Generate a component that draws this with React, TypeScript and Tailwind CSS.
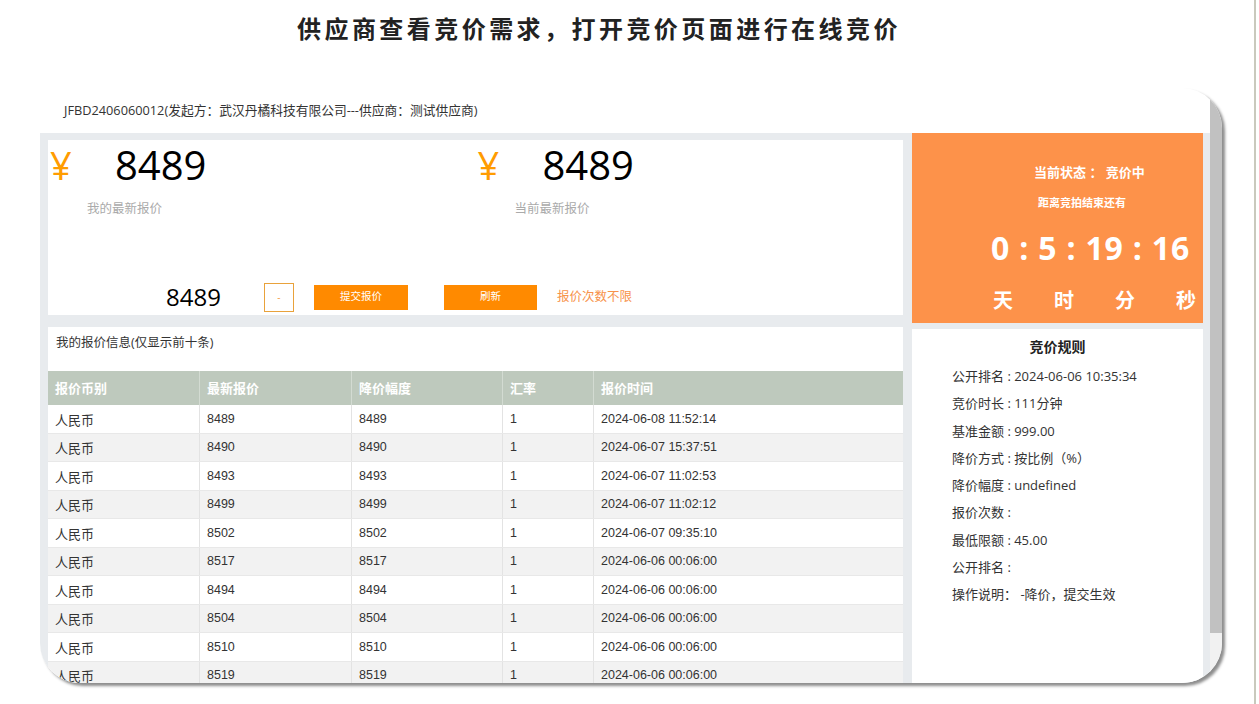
import React from "react";

const rows: [string, string, string, string, string][] = [
  ["人民币", "8489", "8489", "1", "2024-06-08 11:52:14"],
  ["人民币", "8490", "8490", "1", "2024-06-07 15:37:51"],
  ["人民币", "8493", "8493", "1", "2024-06-07 11:02:53"],
  ["人民币", "8499", "8499", "1", "2024-06-07 11:02:12"],
  ["人民币", "8502", "8502", "1", "2024-06-07 09:35:10"],
  ["人民币", "8517", "8517", "1", "2024-06-06 00:06:00"],
  ["人民币", "8494", "8494", "1", "2024-06-06 00:06:00"],
  ["人民币", "8504", "8504", "1", "2024-06-06 00:06:00"],
  ["人民币", "8510", "8510", "1", "2024-06-06 00:06:00"],
  ["人民币", "8519", "8519", "1", "2024-06-06 00:06:00"],
];

const headers = ["报价币别", "最新报价", "降价幅度", "汇率", "报价时间"];

const rules = [
  "公开排名 : 2024-06-06 10:35:34",
  "竞价时长 : 111分钟",
  "基准金额 : 999.00",
  "降价方式 : 按比例（%）",
  "降价幅度 : undefined",
  "报价次数 :",
  "最低限额 : 45.00",
  "公开排名 :",
  "操作说明： -降价，提交生效",
];

function PriceBlock({ label }: { label: string }) {
  return (
    <div className="pl-[2px] pt-[3px]">
      <div className="flex items-center h-[44px]">
        <span className="w-[65px] text-[38px] leading-none text-[#ff9c00]">¥</span>
        <span className="text-[40px] leading-none text-black">8489</span>
      </div>
      <div className="pl-[37px] mt-[14px] text-[12.5px] leading-[16px] text-[#aaaaaa]">{label}</div>
    </div>
  );
}

export default function App() {
  return (
    <div
      className="w-[1259px] h-[704px] bg-white overflow-hidden flex"
      style={{ fontFamily: '"Open Sans", "Noto Sans CJK SC", sans-serif' }}
    >
      <div className="w-[1254px] flex flex-col">
        <div className="h-[88px] pt-[13px] pl-[297px]">
          <h1
            className="text-[24px] leading-[30px] font-bold tracking-[3.45px] text-[#222222] whitespace-nowrap"
            style={{ fontFamily: '"Noto Sans CJK SC", sans-serif' }}
          >
            供应商查看竞价需求，打开竞价页面进行在线竞价
          </h1>
        </div>

        <div className="ml-[40px] w-[1182px] h-[595px] rounded-[40px] bg-white overflow-hidden flex shadow-[3px_3px_3px_rgba(0,0,0,0.45)]">
          <div className="flex-1 flex flex-col min-w-0">
            <div className="h-[45px] flex items-center pl-[24px] text-[12.75px] text-[#333333] whitespace-nowrap">
              JFBD2406060012(发起方：武汉丹橘科技有限公司---供应商：测试供应商)
            </div>

            <div className="flex-1 bg-[#e8ebee] flex pl-[8px] gap-[9px] min-h-0">
              {/* Left column */}
              <div className="w-[855px] flex flex-col pt-[7px] min-h-0">
                <div className="h-[175px] bg-white flex flex-col">
                  <div className="grid grid-cols-2">
                    <PriceBlock label="我的最新报价" />
                    <PriceBlock label="当前最新报价" />
                  </div>
                  <div className="mt-auto mb-[3px] h-[30px] flex items-center pl-[118px]">
                    <span className="text-[24px] leading-none text-black">8489</span>
                    <div className="ml-[43px] w-[30px] h-[29px] border border-[#e9a23b] bg-white flex items-center justify-center text-[10px] text-[#f39c4a]">
                      -
                    </div>
                    <div className="ml-[20px] w-[94px] h-[25px] bg-[#ff8a00] text-white text-[10.5px] flex items-center justify-center">
                      提交报价
                    </div>
                    <div className="ml-[36px] w-[93px] h-[25px] bg-[#ff8a00] text-white text-[10.5px] flex items-center justify-center">
                      刷新
                    </div>
                    <span className="ml-[20px] text-[12.5px] text-[#f7924a]">报价次数不限</span>
                  </div>
                </div>

                <div className="mt-[12px] flex-1 bg-white overflow-hidden">
                  <div className="h-[44px] pl-[8px] pt-[8px] text-[12.5px] leading-[16px] text-[#333333]">
                    我的报价信息(仅显示前十条)
                  </div>
                  <div
                    className="text-[12.5px]"
                    style={{ fontFamily: '"Liberation Sans", "Noto Sans CJK SC", sans-serif' }}
                  >
                    <div className="grid grid-cols-[151px_152px_151px_91px_310px] h-[34px] bg-[#bec9bd]">
                      {headers.map((h, i) => (
                        <div
                          key={h}
                          className={`flex items-center pl-[7px] pt-[2px] text-white font-bold text-[13px] ${i > 0 ? "border-l border-[#d3dbd2]" : ""}`}
                        >
                          {h}
                        </div>
                      ))}
                    </div>
                    {rows.map((r, ri) => (
                      <div
                        key={ri}
                        className={`grid grid-cols-[151px_152px_151px_91px_310px] h-[28.5px] border-b border-[#e8e8e8] ${ri % 2 === 1 ? "bg-[#f2f2f2]" : "bg-white"}`}
                      >
                        {r.map((c, ci) => (
                          <div
                            key={ci}
                            className={`flex items-center pl-[7px] text-[#333333] ${ci === 0 ? "text-[13px] pt-[3px]" : "pt-[1px]"} ${ci > 0 ? "border-l border-[#e3e3e3]" : ""}`}
                          >
                            {c}
                          </div>
                        ))}
                      </div>
                    ))}
                  </div>
                </div>
              </div>

              {/* Right column */}
              <div className="w-[291px] flex flex-col min-h-0">
                <div className="h-[190px] bg-[#fd924a] text-white font-bold flex flex-col whitespace-nowrap">
                  <div className="pl-[122px] pt-[31px] text-[13px] leading-[16px]">当前状态 ： 竞价中</div>
                  <div className="pl-[126px] mt-[15px] text-[11px] leading-[16px]">距离竞拍结束还有</div>
                  <div className="pl-[79px] mt-[17px] text-[32px] leading-[40px] tracking-[0.8px]">0 : 5 : 19 : 16</div>
                  <div className="pl-[81px] mt-[21px] flex gap-[41px] text-[20px] leading-[24px]">
                    <span>天</span>
                    <span>时</span>
                    <span>分</span>
                    <span>秒</span>
                  </div>
                </div>
                <div className="mt-[6px] flex-1 bg-white">
                  <div className="pt-[9px] text-center text-[14px] leading-[18px] font-bold text-[#222222]">竞价规则</div>
                  <div className="mt-[7px]">
                    {rules.map((t, i) => (
                      <div key={i} className="pl-[40px] text-[13px] leading-[27.25px] text-[#333333] whitespace-nowrap">
                        {t}
                      </div>
                    ))}
                  </div>
                </div>
              </div>
            </div>
          </div>

          {/* scrollbar */}
          <div className="w-[12px] flex flex-col">
            <div className="h-[545px] bg-[#c1c1c1]" />
            <div className="flex-1 bg-[#f1f1f1]" />
          </div>
        </div>
      </div>
      <div className="w-[2px] bg-[#c9c9bd]" />
      <div className="flex-1" />
    </div>
  );
}
